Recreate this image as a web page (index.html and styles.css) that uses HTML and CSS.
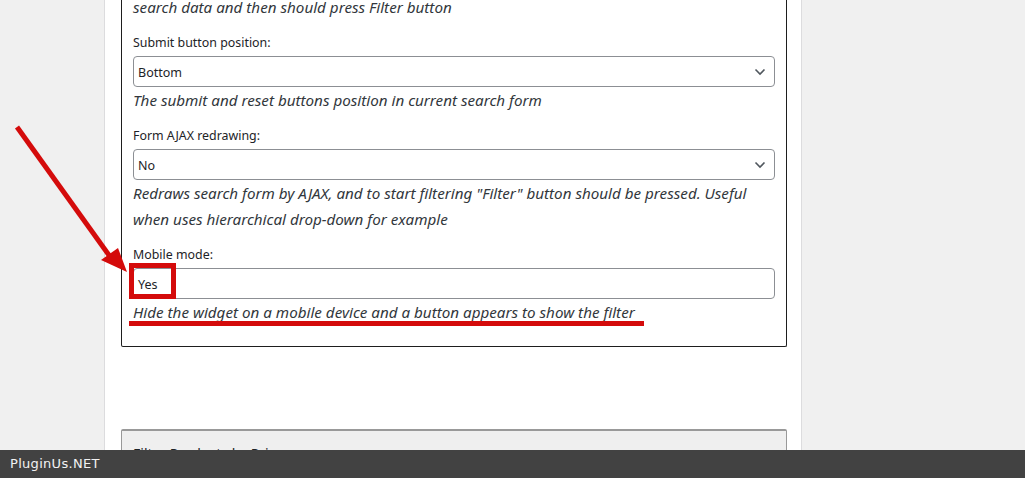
FILE: index.html
```html
<!DOCTYPE html>
<html>
<head>
<meta charset="utf-8">
<link rel="stylesheet" href="styles.css">
</head>
<body>
<div class="column">
  <div class="card">
    <p class="desc">search data and then should press Filter button</p>
    <div class="field">
      <div class="label">Submit button position:</div>
      <div class="select"><span>Bottom</span>
        <svg class="chev" width="12" height="8" viewBox="0 0 12 8"><path d="M1.5 1.5 L6 6 L10.5 1.5" fill="none" stroke="#50575e" stroke-width="1.6"/></svg>
      </div>
      <p class="desc">The submit and reset buttons position in current search form</p>
    </div>
    <div class="field">
      <div class="label">Form AJAX redrawing:</div>
      <div class="select"><span>No</span>
        <svg class="chev" width="12" height="8" viewBox="0 0 12 8"><path d="M1.5 1.5 L6 6 L10.5 1.5" fill="none" stroke="#50575e" stroke-width="1.6"/></svg>
      </div>
      <p class="desc">Redraws search form by AJAX, and to start filtering "Filter" button should be pressed. Useful when uses hierarchical drop-down for example</p>
    </div>
    <div class="field">
      <div class="label">Mobile mode:</div>
      <div class="select"><span>Yes</span></div>
      <p class="desc">Hide the widget on a mobile device and a button appears to show the filter</p>
    </div>
  </div>
  <div class="card card-collapsed">
    <div class="card-title">Filter Products by Price</div>
  </div>
</div>

<svg class="annot" width="1025" height="478" viewBox="0 0 1025 478">
  <line x1="17" y1="127" x2="111" y2="258" stroke="#d40b0b" stroke-width="5"/>
  <polygon points="127,272 101,260 118,248" fill="#d40b0b"/>
  <rect x="131.5" y="265.5" width="42" height="31" fill="none" stroke="#d40b0b" stroke-width="5"/>
  <rect x="129" y="321" width="515" height="5" fill="#d40b0b"/>
</svg>

<div class="footer">PluginUs.NET</div>
</body>
</html>
```

FILE: styles.css
```css
html, body {
  margin: 0;
  padding: 0;
  height: 100%;
  overflow: hidden;
}
body {
  background: #f0f0f0;
  font-family: "Noto Sans", "Open Sans", sans-serif;
  color: #1d2327;
}
.column {
  margin-left: 104px;
  width: 698px;
  height: 100%;
  background: #fff;
  border-left: 1px solid #dcdcde;
  border-right: 1px solid #dcdcde;
  padding: 0 15px 0 16px;
  box-sizing: border-box;
}
.card {
  border: 1px solid #1e1e1e;
  border-radius: 2px;
  border-top: none;
  padding: 0 11px 21px 11px;
  margin-top: -6px;
  width: 666px;
  box-sizing: border-box;
}
.desc {
  margin: 0;
  font-style: italic;
  font-size: 15.2px;
  line-height: 26px;
  color: #32373c;
}
.field {
  margin-top: 14px;
}
.label {
  font-size: 12.4px;
  line-height: 18px;
  margin-bottom: 4px;
}
.select {
  height: 31px;
  box-sizing: border-box;
  border: 1px solid #8c8f94;
  border-radius: 4px;
  display: flex;
  align-items: center;
  justify-content: space-between;
  padding: 1px 8px 0 4px;
  font-size: 12.5px;
}
.chev {
  display: block;
}
.card-collapsed {
  margin-top: 82px;
  background: #efefef;
  border: 1px solid #999;
  border-top-width: 2px;
  padding: 13px 11px 20px;
}
.card-title {
  font-size: 14px;
}
.annot {
  position: absolute;
  left: 0;
  top: 0;
  pointer-events: none;
}
.footer {
  position: fixed;
  left: 0;
  right: 0;
  bottom: 0;
  height: 28px;
  background: #424242;
  color: #f2f2f2;
  font-family: "DejaVu Sans", sans-serif;
  font-size: 13px;
  line-height: 28px;
  padding-left: 10px;
  letter-spacing: 0.3px;
}
```
